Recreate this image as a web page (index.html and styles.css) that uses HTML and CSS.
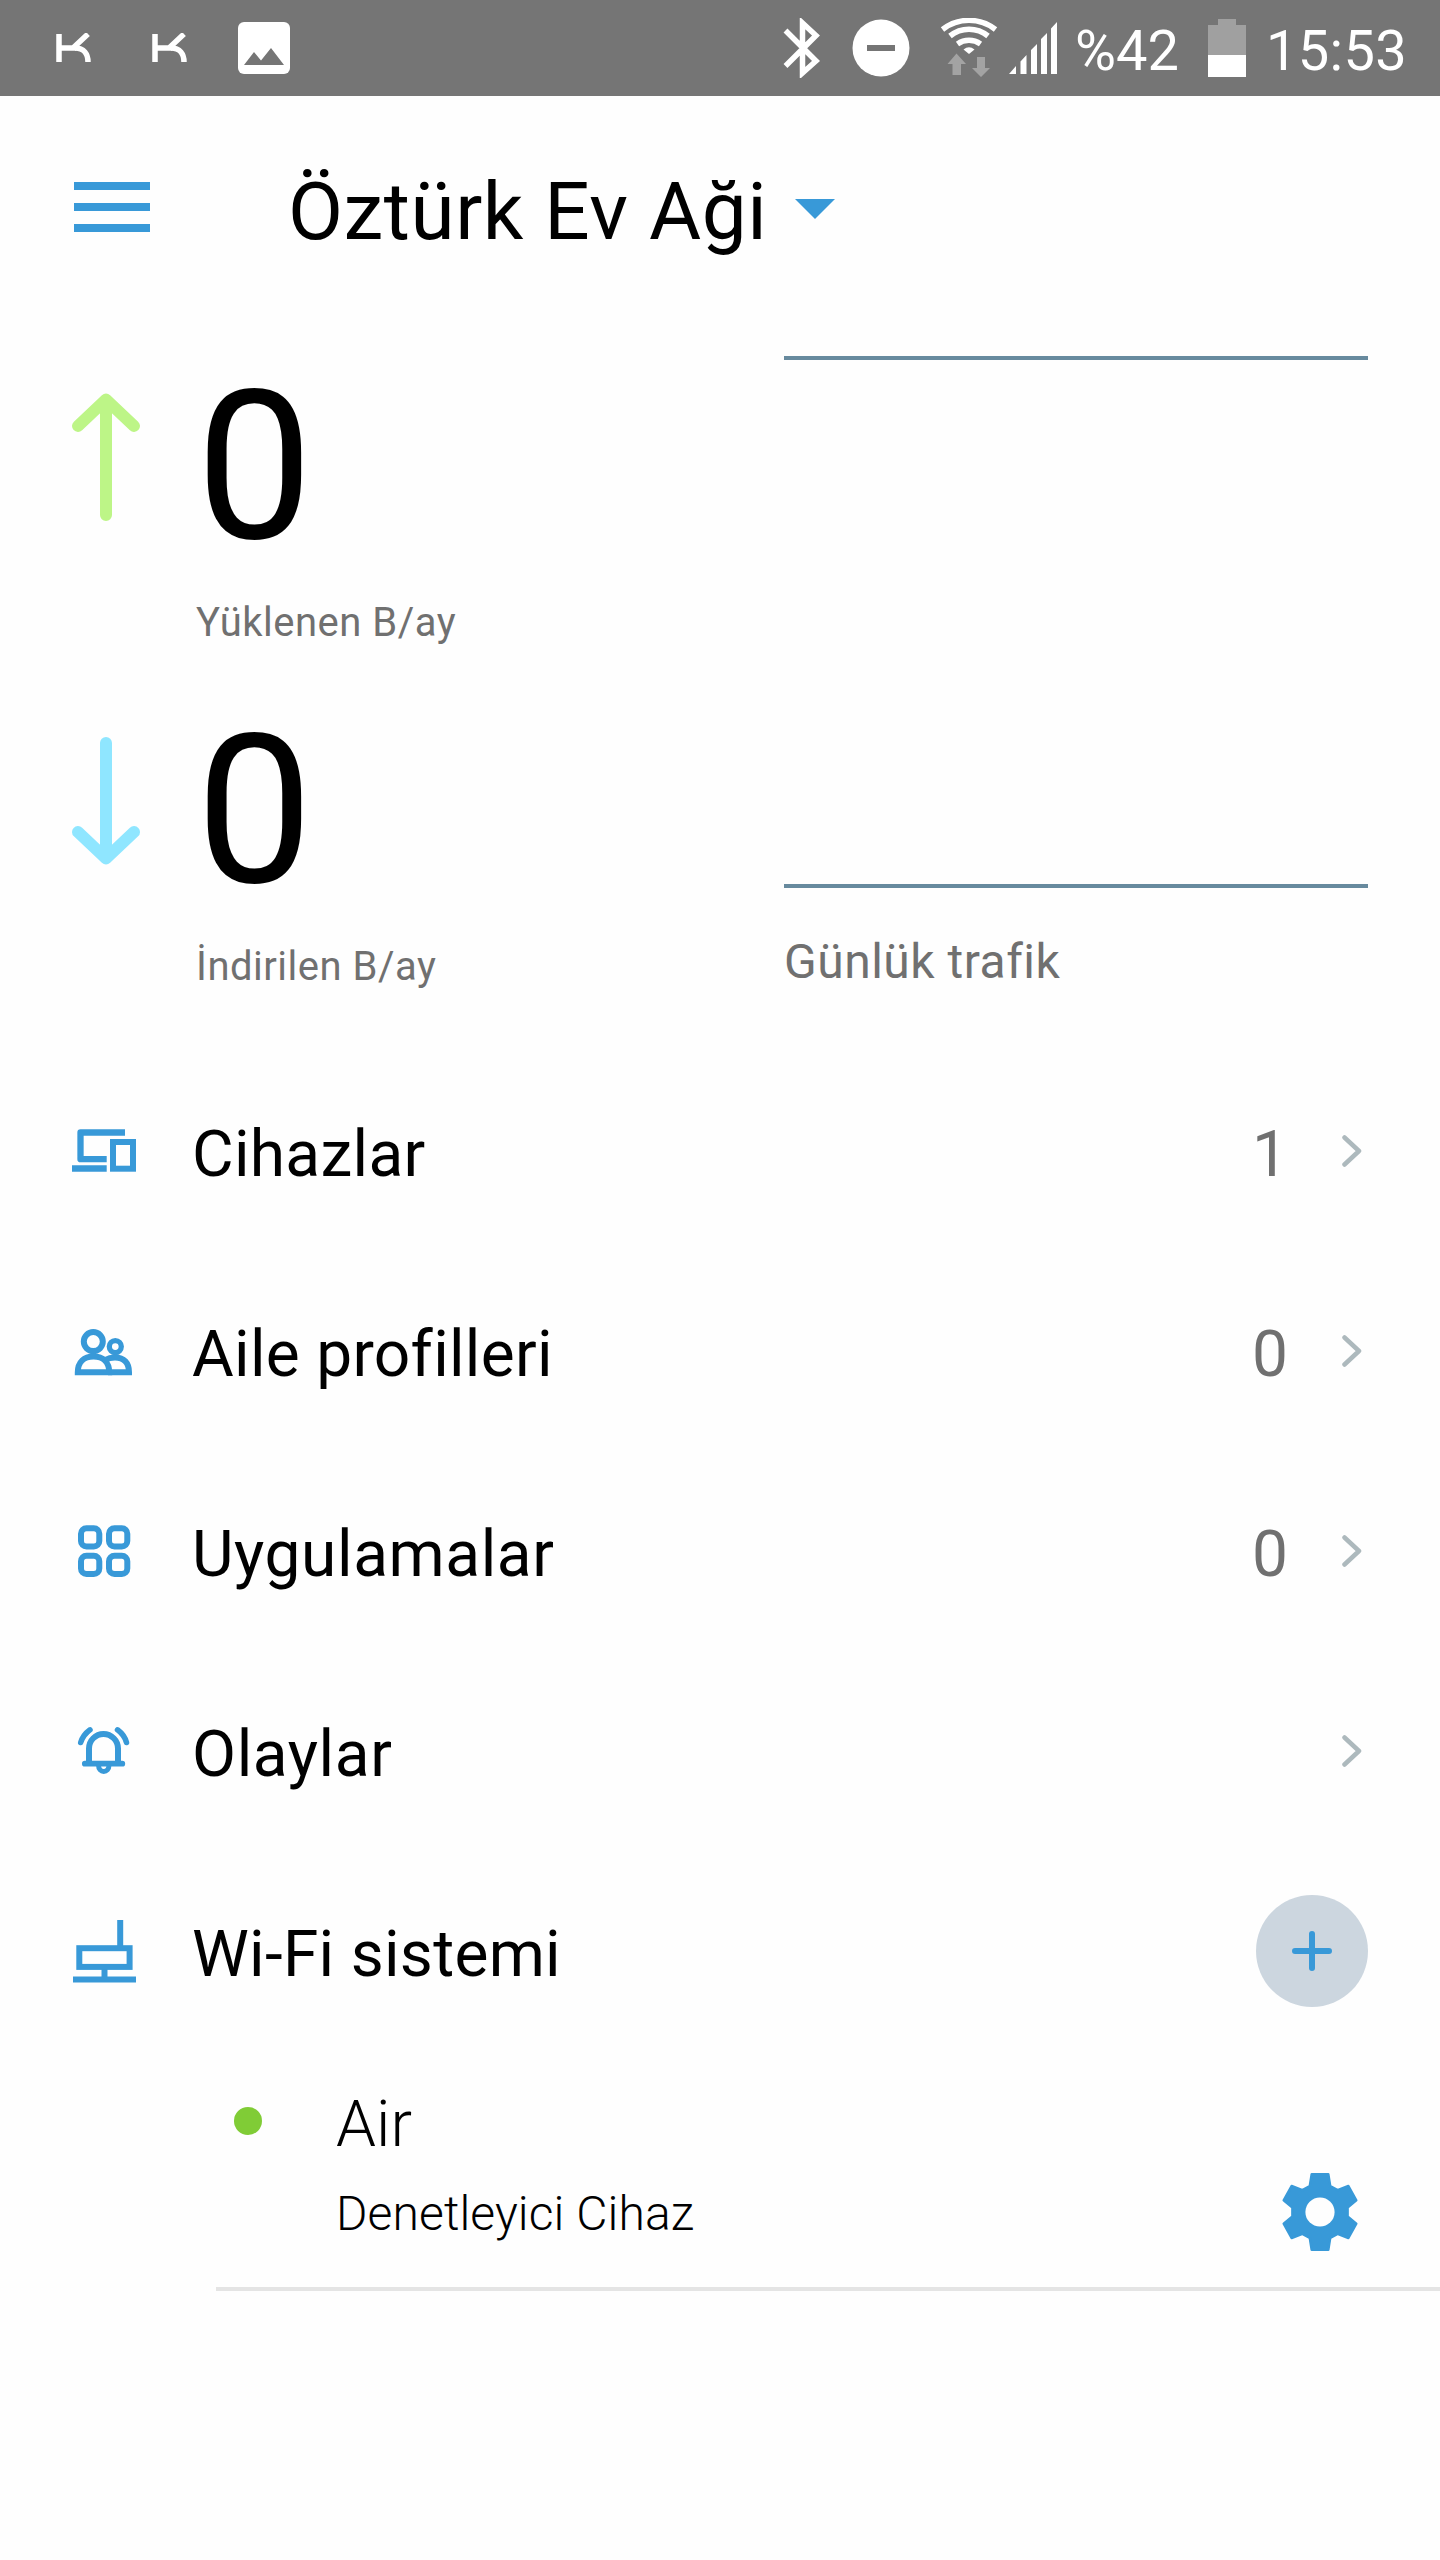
FILE: index.html
```html
<!DOCTYPE html>
<html lang="tr">

<head>
    <meta charset="UTF-8">
    <title>Öztürk Ev Aği</title>
    <link rel="stylesheet" href="styles.css">
</head>

<body>
    <div class="statusbar">
        <svg class="logo" width="36" height="30" viewBox="0 0 36 30">
            <path d="M3 1V29M3 15H20M17 15L32 1" />
            <path d="M19 15C28 15 32 21 32 29" />
        </svg>
        <svg class="logo" width="36" height="30" viewBox="0 0 36 30">
            <path d="M3 1V29M3 15H20M17 15L32 1" />
            <path d="M19 15C28 15 32 21 32 29" />
        </svg>
        <svg class="photo" width="52" height="52" viewBox="0 0 52 52">
            <rect width="52" height="52" rx="6" fill="#fff" />
            <path d="M6 43L16 30L23 38.500L33 26L46 43Z" fill="#757575" />
        </svg>
        <svg class="bluetooth" width="38" height="60" viewBox="0 0 38 60">
            <path d="M2.500 12.500L33 43L19.500 55V5L33 17.500L2.500 48" fill="none" stroke="#fff" stroke-width="5.500" />
        </svg>
        <svg class="dnd" width="58" height="58" viewBox="0 0 58 58">
            <circle cx="29" cy="29" r="28.500" fill="#fff" />
            <rect x="15" y="26" width="28" height="6" fill="#757575" />
        </svg>
        <svg class="wifi" width="58" height="60" viewBox="0 0 58 60">
            <g fill="none" stroke="#fff" stroke-width="5.500">
                <path d="M2.500 11.500A43 43 0 0 1 55.500 11.500" />
                <path d="M10 18A30 30 0 0 1 48 18" />
                <path d="M17.500 26A20 20 0 0 1 40.500 26" />
            </g>
            <path d="M23.500 31.500Q29 27 34.500 31.500L29 36Z" fill="#fff" />
            <path d="M16.500 35.500L26 46H21V57H12.500V46H7.500ZM41 59L32 50H37V39H45V50H50Z" fill="#a3a3a3" />
        </svg>
        <svg class="signal" width="48" height="52" viewBox="0 0 48 52" fill="#fff">
            <path d="M0 52L7 44V52ZM11.500 39.500L17.500 33V52H11.500ZM22 28L28 22V52H22ZM32 17L38 11V52H32ZM42 6.500L48 0V52H42Z" />
        </svg>
        <span class="percent">%42</span>
        <svg class="battery" width="38" height="58" viewBox="0 0 38 58">
            <path d="M0 6H10V0H28V6H38V36H0Z" fill="#a0a0a0" />
            <rect y="36" width="38" height="22" fill="#fff" />
        </svg>
        <span class="clock">15:53</span>
    </div>

    <div class="header">
        <div class="menu">
            <span></span>
            <span></span>
            <span></span>
        </div>
        <h1>Öztürk Ev Aği</h1>
        <div class="caret"></div>
    </div>

    <div class="traffic">
        <div class="stats">
            <div class="stat">
                <svg class="up" width="68" height="128" viewBox="0 0 68 128">
                    <path d="M34 122V7M6 33L34 6.500L62 33" />
                </svg>
                <div>
                    <div class="number">0</div>
                    <div class="unit">Yüklenen B/ay</div>
                </div>
            </div>
            <div class="stat">
                <svg class="down" width="68" height="128" viewBox="0 0 68 128">
                    <path d="M34 6V121M6 95L34 121.500L62 95" />
                </svg>
                <div>
                    <div class="number">0</div>
                    <div class="unit">İndirilen B/ay</div>
                </div>
            </div>
        </div>
        <div class="daily">
            <div class="chart"></div>
            <p>Günlük trafik</p>
        </div>
    </div>

    <div class="list">
        <div class="row">
            <svg class="icon" viewBox="0 0 80 80">
                <path d="M61 18.500H16.500V45.200H42.700" stroke-width="6.300" stroke-linejoin="round" />
                <path d="M8 54.400H42.700" stroke-width="6.500" />
                <rect x="49" y="28" width="20" height="26.700" />
            </svg>
            <span class="name">Cihazlar</span>
            <span class="count">1</span>
            <svg class="arrow" width="20" height="32" viewBox="0 0 20 32"><path d="M2.500 2.500L17 16L2.500 29.500" /></svg>
        </div>
        <div class="row">
            <svg class="icon" viewBox="0 0 80 80">
                <circle cx="29.300" cy="27.600" r="9.500" />
                <circle cx="51.300" cy="32.600" r="6" stroke-width="5.300" />
                <path d="M13.800 58.300C13.800 48 20 42.500 29.500 42.500S45.200 48 45.200 58.300Z" />
                <path d="M41 46C44 44.300 47 43.500 51 43.500C60 43.500 65 49 65 58.300H44" />
            </svg>
            <span class="name">Aile profilleri</span>
            <span class="count">0</span>
            <svg class="arrow" width="20" height="32" viewBox="0 0 20 32"><path d="M2.500 2.500L17 16L2.500 29.500" /></svg>
        </div>
        <div class="row">
            <svg class="icon" viewBox="0 0 80 80">
                <rect x="17" y="14.300" width="18.300" height="18.300" rx="5.500" />
                <rect x="45" y="14.300" width="18.300" height="18.300" rx="5.500" />
                <rect x="17" y="41.700" width="18.300" height="18.300" rx="5.500" />
                <rect x="45" y="41.700" width="18.300" height="18.300" rx="5.500" />
            </svg>
            <span class="name wide">Uygulamalar</span>
            <span class="count">0</span>
            <svg class="arrow" width="20" height="32" viewBox="0 0 20 32"><path d="M2.500 2.500L17 16L2.500 29.500" /></svg>
        </div>
        <div class="row">
            <svg class="icon" viewBox="0 0 80 80" stroke-linecap="round">
                <path d="M25 49V34.500A14.500 14.500 0 0 1 54 34.500V49" />
                <path d="M20.800 49.700H58.300" stroke-width="5.700" />
                <path d="M34.500 51C34.500 59.800 45 59.800 45 51" stroke-width="5" />
                <path d="M16.700 28.500Q19 21 26 15.800M62.500 28.500Q60.500 21 53.500 15.800" stroke-width="5.500" />
            </svg>
            <span class="name wide">Olaylar</span>
            <svg class="arrow" width="20" height="32" viewBox="0 0 20 32"><path d="M2.500 2.500L17 16L2.500 29.500" /></svg>
        </div>
        <div class="row">
            <svg class="icon" viewBox="0 0 80 80">
                <path d="M56.200 6V32M40.500 55V63M9 65.400H72" />
                <rect x="15.300" y="34.200" width="50.300" height="18.700" />
            </svg>
            <span class="name">Wi-Fi sistemi</span>
            <div class="add">
                <svg width="40" height="40" viewBox="0 0 40 40"><path d="M20 3V37M3 20H37" /></svg>
            </div>
        </div>
    </div>

    <div class="device">
        <div class="dot"></div>
        <div class="info">
            <div class="title">Air</div>
            <div class="role">Denetleyici Cihaz</div>
        </div>
        <svg class="gear" width="80" height="80" viewBox="0 0 80 80">
            <path d="M31.700 2.300H48.300L50.200 14L57.600 18.200L68.400 14L76.300 28.300L67.600 35.500V44.500L76.300 51.700L68.400 66L57.600 61.800L50.200 66L48.300 77.700H31.700L29.800 66L22.400 61.800L11.600 66L3.700 51.700L12.400 44.500V35.500L3.700 28.300L11.600 14L22.400 18.200L29.800 14Z" />
            <circle cx="40" cy="40" r="14.600" />
        </svg>
    </div>
</body>

</html>
```

FILE: styles.css
```css
* {
    margin: 0;
    padding: 0;
    box-sizing: border-box;
}

body {
    width: 1440px;
    height: 2560px;
    background: #fefefe;
    font-family: Roboto, sans-serif;
    color: #000;
    overflow: hidden;
}

svg {
    display: block;
    flex-shrink: 0;
}

/* status bar */
.statusbar {
    height: 96px;
    background: #757575;
    color: #fff;
    display: flex;
    align-items: center;
    padding-left: 56px;
    font-size: 56px;
    line-height: 66px;
}

.logo {
    fill: none;
    stroke: #fff;
    stroke-width: 5.5px;
    margin-right: 60px;
}

.photo {
    margin-left: -10px;
}

.bluetooth {
    margin-left: 493px;
}

.dnd {
    margin-left: 31px;
}

.wifi {
    margin-left: 30px;
}

.signal {
    margin-left: 11px;
}

.percent {
    width: 133px;
    margin-left: 18px;
    padding-top: 5px;
}

.clock {
    margin-left: 20px;
    padding-top: 5px;
    letter-spacing: 0.3px;
}

/* header */
.header {
    height: 232px;
    display: flex;
    align-items: center;
    padding-left: 74px;
}

.menu {
    width: 76px;
    display: flex;
    flex-direction: column;
    gap: 13px;
    margin-bottom: 10px;
}

.menu span {
    height: 8px;
    background: #3899d8;
}

h1 {
    font-size: 80px;
    font-weight: 400;
    line-height: 94px;
    letter-spacing: 0.55px;
    margin-left: 138px;
    width: 507px;
    white-space: nowrap;
}

.caret {
    border-left: 20px solid transparent;
    border-right: 20px solid transparent;
    border-top: 20px solid #3899d8;
    margin-bottom: 6px;
}

/* traffic */
.traffic {
    display: flex;
    height: 726px;
}

.stats {
    width: 784px;
    padding-left: 72px;
}

.stat {
    height: 344px;
    display: flex;
    gap: 56px;
}

.stat svg {
    margin-top: 65px;
    fill: none;
    stroke-width: 12px;
    stroke-linecap: round;
    stroke-linejoin: round;
}

.up {
    stroke: #bdf587;
}

.down {
    stroke: #8fe6ff;
}

.number {
    font-size: 208px;
    line-height: 208px;
    margin-top: 35px;
}

.unit {
    font-size: 40px;
    line-height: 48px;
    letter-spacing: 0.5px;
    margin-top: 28px;
    color: #707070;
}

.daily {
    width: 584px;
    padding-top: 28px;
}

.chart {
    height: 532px;
    border-top: 4px solid #678a9e;
    border-bottom: 4px solid #678a9e;
}

.daily p {
    font-size: 48px;
    line-height: 56px;
    letter-spacing: 0.5px;
    margin-top: 46px;
    color: #707070;
}

/* list */
.row {
    height: 200px;
    display: flex;
    align-items: center;
    padding: 0 72px 0 64px;
    font-size: 64px;
}

.icon {
    width: 80px;
    height: 80px;
    fill: none;
    stroke: #3899d8;
    stroke-width: 6px;
}

.name {
    flex: 1;
    margin-left: 48px;
    letter-spacing: 0.3px;
}

.name.wide {
    letter-spacing: 0.6px;
}

.count {
    color: #707070;
}

.arrow {
    margin: 0 6px 6px 54px;
    fill: none;
    stroke: #adb9bd;
    stroke-width: 4.5px;
    stroke-linecap: round;
    stroke-linejoin: round;
}

.add {
    width: 112px;
    height: 112px;
    border-radius: 50%;
    background: #ccd6df;
    display: flex;
    align-items: center;
    justify-content: center;
    margin-bottom: 6px;
}

.add svg {
    stroke: #3899d8;
    stroke-width: 6px;
    stroke-linecap: round;
}

/* device */
.device {
    height: 237px;
    margin-left: 216px;
    padding: 32px 80px 0 18px;
    border-bottom: 4px solid #e4e4e4;
    display: flex;
    font-weight: 300;
}

.dot {
    width: 28px;
    height: 28px;
    border-radius: 50%;
    background: #80cc36;
    margin-top: 21px;
}

.info {
    flex: 1;
    margin-left: 74px;
}

.title {
    font-size: 64px;
    line-height: 76px;
    margin-top: 1px;
}

.role {
    font-size: 48px;
    line-height: 56px;
    margin-top: 23px;
    letter-spacing: 0.1px;
}

.gear {
    margin-top: 86px;
    stroke: #3899d8;
    stroke-width: 2.5px;
    stroke-linejoin: round;
    fill: #3899d8;
}

.gear circle {
    fill: #fefefe;
    stroke: none;
}
```
